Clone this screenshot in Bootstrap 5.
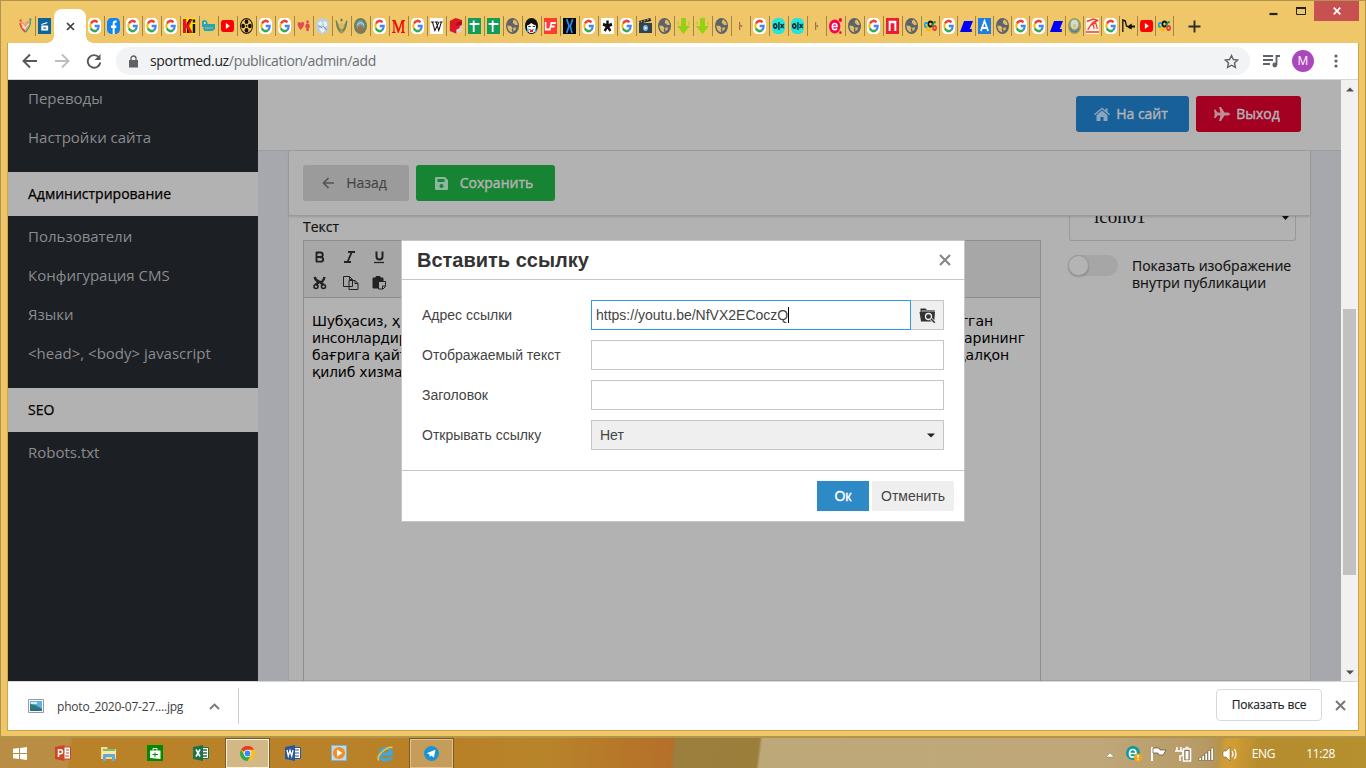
<!DOCTYPE html>
<html lang="ru">
<head>
<meta charset="utf-8">
<title>sportmed.uz</title>
<link href="https://cdn.jsdelivr.net/npm/bootstrap@5.3.0/dist/css/bootstrap.min.css" rel="stylesheet">
<script src="https://cdn.jsdelivr.net/npm/bootstrap@5.3.0/dist/js/bootstrap.bundle.min.js"></script>
<style>
body{width:1366px;height:768px;overflow:hidden;font-family:"Open Sans","Noto Sans",sans-serif;line-height:1.2}
svg{display:block;flex:none}
.desk{width:1366px;height:768px}
.win{height:738px;background:#efc769;border:1px solid #b3944d;border-bottom:2px solid #b3944d;padding:0 6px}
.strip{height:42px;padding:11px 0 0 10px}
.tabc{width:19px;height:29px;padding-top:5px;flex:none;position:relative}
.tabc.slim{width:18px}
.tabc::after{content:"";position:absolute;right:0;top:4px;width:1px;height:20px;background:#a08448}
.tabc.plain::after{display:none}
.tabc svg{width:13px;height:16px;margin:1px 0 0 2px}
.tabon{width:32px;height:34px;margin:-3px 0 0 -1px;background:#fff;border-radius:8px 8px 0 0;position:relative;flex:none}
.tabon::before,.tabon::after{content:"";position:absolute;bottom:0;width:7px;height:7px;background:radial-gradient(circle at 0 0,transparent 6.5px,#fff 7px)}
.tabon::before{left:-7px}
.tabon::after{right:-7px;background:radial-gradient(circle at 100% 0,transparent 6.5px,#fff 7px)}
.caps{position:absolute;right:6px;top:0;height:20px}
.capx{width:45px;height:20px;background:#c75050}
.client{width:1352px;height:688px;border:1px solid #cfa34a;border-top:0;background:#fff}
.tools{height:37px;border-bottom:1px solid #d5d6d8}
.omni{width:1134px;height:28px;border-radius:14px;background:#f1f3f4;margin-left:14px;font-size:14px;color:#6b6f73;padding:0 11px 0 13px}
.omni b{font-weight:400;color:#222427}
.url{margin-left:12px;letter-spacing:-.34px}
.ava{width:22px;height:22px;border-radius:50%;background:#ab47bc;color:#fff;font-size:12px;margin-left:12px}
.page{height:601px;background:#a6a8ad;overflow:hidden}
.side{width:250px;background:#1c1f24;color:#8b8c8e;font-size:15px}
.side a{display:flex;align-items:center;height:39px;padding:0 0 2px 20px;color:inherit;text-decoration:none}
.grp{padding:1px 0 15px}
.grp.first{padding-top:0}
.grp.first a:first-child{height:38px}
.side h6{height:44px;margin:0;background:#b2b2b2;color:#000;font-size:14px;font-weight:400;padding-left:20px;-webkit-text-stroke:.25px #000}
.main{width:1083px}
.topbar{height:71px;background:#b2b2b2;border-bottom:1px solid #9c9da1;padding:0 40px 2px 0}
.bt{height:36px;border:0;border-radius:3px;font-size:14px;line-height:1;padding:0 3px 0 0;-webkit-text-stroke:.45px currentColor;display:flex;align-items:center;justify-content:center}
.bt:hover{color:inherit}
.panel{width:1023px;height:530px;margin-left:30px;background:#b2b2b2;border:1px solid #9fa1a6;border-top:0}
.bar2{height:65px;border-bottom:1px solid #9b9b9b;box-shadow:0 1px 2px rgba(0,0,0,.15);padding:0 14px;position:relative;z-index:1}
.edit{width:738px;height:460px;border:1px solid #8d8d8d;margin-top:4px}
.etb{height:57px;background:#a7a7a7;border-bottom:1px solid #8d8d8d;padding:8px 8px}
.etx{font-family:"DejaVu Sans",sans-serif;font-size:14px;line-height:17px;color:#000;padding:15px 8px;white-space:nowrap;letter-spacing:-.06px}
.etx .lft{letter-spacing:-.22px}
.cutsel{height:25px;border:1px solid #999;border-top:0;border-radius:0 0 3px 3px;overflow:hidden;width:227px;font:19px/19px "Liberation Serif",serif;color:#111;padding:0 5px 0 24px}
.swt{width:50px;height:21px;border-radius:11px;background:#a6a6a6;margin-left:-1px}
.swt i{display:block;width:21px;height:21px;border-radius:50%;background:#b4b4b4;border:1px solid #999;box-shadow:0 1px 2px rgba(0,0,0,.2)}
.scr{width:17px;background:#f1f1f1;padding:7px 2px 6px}
.thumb{height:266px;background:#c1c1c1;margin-top:217px}
.veil{position:absolute;inset:0;padding-top:160px}
.dlg{width:564px;height:282px;background:#fff;border:1px solid #c5c5c5;font-family:"Liberation Sans",Arial,sans-serif;font-size:14px;color:#444}
.dlg h5{height:39px;border-bottom:1px solid #c5c5c5;margin:0;padding:0 13px 0 15px;font-size:20px;font-weight:700;color:#333}
.dlg .lines{height:191px;border-bottom:1px solid #c5c5c5;padding:20px;display:flex;flex-direction:column;gap:10px}
.lb{width:169px}
.fld{height:30px;border:1px solid #c5c5c5;width:353px;padding:0 8px}
.fld.on{width:320px;border-color:#3498db;padding:0 4px}
.caret1{width:1px;height:16px;background:#000}
.shelf{height:49px;border-top:1px solid #d8d8d8;color:#3c4043;font-size:12px}
.dl{width:231px;height:36px;border-right:1px solid #cfcfcf;padding-left:20px}
.fnm{margin:2px 0 0 13px;letter-spacing:-.2px}
.showall{width:106px;height:32px;border:1px solid #d8d9dc;border-radius:4px;font-size:12px;letter-spacing:-.15px;color:#202124;-webkit-text-stroke:.15px;margin-top:-2px}
.task{height:30px;background:linear-gradient(98deg,transparent 0 1209px,#cf9c35 1214px 1224px,transparent 1250px),linear-gradient(97deg,#b98d43 0 69px,#b98229 73px 300px,#b98026 440px,#b8842a 540px,#b56f29 668px,#9b7f3d 672px,#9c7e3b 754px,transparent 757px),linear-gradient(90deg,#bda879 757px,#c0a779 1100px,#b69a66 1205px,#b68b2d 1240px,#b5902f)}
.ti{width:46px;height:30px;flex:none}
.ti.first{width:40px}
.ti.act{width:43px;height:29px;border:1px solid #fff4dd;outline:1px solid #7a5a26;background:#d3b787;margin:0 1.5px}
.ti.run{width:43px;height:29px;border:1px solid #e2c18c;outline:1px solid #7a5a26;background:#c59c5a;margin:0 1.5px}
.tray{color:#fff;font-size:12px;letter-spacing:-.35px;padding:2px 31px 0 0}
</style>
</head>
<body>
<svg width="0" height="0" class="position-absolute"><defs>
<symbol id="g" viewBox="0 0 16 16" preserveAspectRatio="none"><rect width="16" height="16" rx="5" fill="#fff"/><g fill="none" stroke-width="2.6"><path d="M3.6 5.6A5.2 5.2 0 0 1 11.7 4.2" stroke="#ea4335"/><path d="M3.5 5.5A5.3 5.3 0 0 0 3.5 10.5" stroke="#fbbc05"/><path d="M3.5 10.4A5.3 5.3 0 0 0 11.4 12" stroke="#34a853"/><path d="M8.2 8H13.2A5.2 5.2 0 0 1 11.3 12" stroke="#4285f4"/></g></symbol>
<symbol id="heart" viewBox="0 0 16 16" preserveAspectRatio="none"><path d="M1 4c2-2 5 0 6 2 2-4 6-4 7-3-2 5-4 8-8 11C3 11 1 8 1 4z" fill="#e9a27a"/><path d="M1 5c1 5 4 7 7 9" stroke="#e04a35" stroke-width="1.6" fill="none"/><path d="M14 3c1 5-3 8-6 11" stroke="#4a9d78" stroke-width="1.6" fill="none"/><path d="M4 6l3 4 5-4M4 9l4 2" stroke="#fff" fill="none"/><circle cx="14" cy="1.5" r="1.3" fill="#3c9c70"/><circle cx="2" cy="2.5" r="1.2" fill="#e04a35"/></symbol>
<symbol id="clap" viewBox="0 0 16 16" preserveAspectRatio="none"><path d="M0 0h16v16H0z" fill="#0a659c"/><path d="M4 7.500h8.500v5H4zM4 6l7.500-2v1.300L4 7z" fill="#fff"/><path d="M6.500 9.500h3.500v1.200H6.500z" fill="#0a659c"/></symbol>
<symbol id="fb" viewBox="0 0 16 16" preserveAspectRatio="none"><rect width="16" height="16" rx="5" fill="#1283f5"/><path d="M7 16v-6H5V7.400h2V5.600C7 3.400 8.300 2.500 10 2.500h1.800v2.300h-1.200c-.9 0-1.2.4-1.2 1.200v1.400h2.300L11.300 10H9.400v6z" fill="#fff"/></symbol>
<symbol id="ki" viewBox="0 0 16 16" preserveAspectRatio="none"><path d="M0 0h16v16H0z" fill="#ffe100"/><path d="M0 1h4v5l4-5h4L7.500 8 12 15H8L4 9.500V15H0z" fill="#e5141b"/><path d="M5 10l3 5H5zM12 6h3v9h-3zM12 1.500h3v3h-3zM8 1h2L5 7V5z" fill="#111"/></symbol>
<symbol id="croc" viewBox="0 0 16 16" preserveAspectRatio="none"><path d="M0 3l3-1 3 1 1 3h9v5l-3 2H3l-2-3 2-1H0z" fill="#2ca3a8"/><path d="M4 10h10" stroke="#bfeaea" stroke-dasharray="1.5 1"/><circle cx="3.500" cy="5" r="1" fill="#fff"/></symbol>
<symbol id="yt" viewBox="0 0 16 16" preserveAspectRatio="none"><rect y="2" width="16" height="12" rx="3" fill="#f00"/><path d="M6 5l5 3-5 3z" fill="#fff"/></symbol>
<symbol id="reel" viewBox="0 0 16 16" preserveAspectRatio="none"><circle cx="8" cy="8" r="7.400" fill="none" stroke="#2a2110" stroke-width="1.200"/><g fill="#171208"><circle cx="8" cy="3.800" r="2.300"/><circle cx="8" cy="12.200" r="2.300"/><circle cx="3.800" cy="8" r="2.300"/><circle cx="12.200" cy="8" r="2.300"/><circle cx="8" cy="8" r="1"/></g></symbol>
<symbol id="love" viewBox="0 0 16 16" preserveAspectRatio="none"><path d="M4.500 12C0 8 0 4 2.500 4c1.200 0 2 1 2 1.500C5 4.500 6 4 7 4c3 0 2.500 4-2.500 8zM11 6h4l1 3-1.500 1v3h-3v-3L10 9z" fill="#e5484d"/><circle cx="13" cy="4" r="1.700" fill="#e5484d"/></symbol>
<symbol id="orb" viewBox="0 0 16 16" preserveAspectRatio="none"><circle cx="8" cy="8" r="8" fill="#b9cfdf"/><path d="M2 5l4-2 2 3-3 2zM9 3l4 1 1 4-4 1zM4 10l5-1 2 4-4 2z" fill="#e9f1f6"/><path d="M3 8l5 2M9 8l4 4" stroke="#6d93b0"/></symbol>
<symbol id="bird" viewBox="0 0 16 16" preserveAspectRatio="none"><path d="M1 1c0 7 1 12 7 15 6-3 7-8 7-15l-4 6H5z" fill="#a89a52"/><path d="M1.500 3c1 5 2 8 5 10M14.500 3c-1 5-2 8-5 10" stroke="#5b8360" fill="none" stroke-width="1.500"/><circle cx="8" cy="8" r="3" fill="#d7b86a"/><circle cx="8" cy="2" r="1.500" fill="#7d7a4c"/></symbol>
<symbol id="uz" viewBox="0 0 16 16" preserveAspectRatio="none"><circle cx="8" cy="8" r="8" fill="#6e7f5f"/><circle cx="8" cy="7.500" r="5" fill="#6aa5b9"/><path d="M4 10l4-3 4 3-1 3H5z" fill="#ad6c3d"/><path d="M4 7c2-3 6-3 8 0" stroke="#e8dfb0" fill="none"/></symbol>
<symbol id="m" viewBox="0 0 16 16" preserveAspectRatio="none"><path d="M0 2h4.200L8.200 11 12 2h4v.8l-1.500.7v10l1.500.7v.8h-5v-.8l1.500-.7V5L8.200 15h-.9L3 5v8.500l1.500.7v.8H0v-.8l1.700-.7v-10L0 2.800z" fill="#f00b0b"/></symbol>
<symbol id="w" viewBox="0 0 16 16" preserveAspectRatio="none"><path d="M0 0h16v16H0z" fill="#fff"/><path d="M1 4h4M6 4h4M12 4h3.500M3 4l3 8.500L11 4M7.500 4l3.300 8.500L14 4" stroke="#111" fill="none" stroke-width="1.200"/></symbol>
<symbol id="redf" viewBox="0 0 16 16" preserveAspectRatio="none"><path d="M1 3l7-3 8 2v4L9 9V7l7-2v6l-6 2v3l-9-3z" fill="#dc1827"/><path d="M9 5l7-2v3L9 8z" fill="#a90f1a"/><path d="M9 10l7-3v6l-7 3z" fill="#ddd0ca"/><path d="M8 9l5-2v3l-5 2z" fill="#dc1827"/></symbol>
<symbol id="sh" viewBox="0 0 16 16" preserveAspectRatio="none"><path d="M0 0h16v16H0z" fill="#0f9d58"/><path d="M2 6h12M7 2.500v11.500" stroke="#fff" stroke-width="2.200"/></symbol>
<symbol id="gl" viewBox="0 0 16 16" preserveAspectRatio="none"><circle cx="8" cy="8" r="8" fill="#5f6368"/><path d="M10 1.500Q14.500 3.500 14.300 7H11L10 5.500H8.500V3.200zM1.700 7.500L6 8l2 2-1 1.500 1 2.800Q2 14 1.700 7.500zM9 9.500h3.500l-1 2.500-2.500 1z" fill="#e0bc6a"/></symbol>
<symbol id="face" viewBox="0 0 16 16" preserveAspectRatio="none"><circle cx="8" cy="8" r="8" fill="#111"/><path d="M2.500 7.500l3-1 2-1.500 3 1.500 3 1v2.500c0 3-2 5-5.500 5S2.500 13 2.500 10z" fill="#fff"/><path d="M4 8.500h3M9.500 8.500h3M5.500 11.500q2.500 2 5 0" stroke="#111" fill="none"/><path d="M2.500 10.500h2v3.500h-2zM12 10.500h2V14h-2z" fill="#2ca8e8"/><path d="M6 12h4v2H6z" fill="#d22"/></symbol>
<symbol id="lf" viewBox="0 0 16 16" preserveAspectRatio="none"><path d="M0 0h16v16H0z" fill="#ff3a2e"/><path d="M2 4v7.500h5M7 12.500l2-7.500h5.500M8.500 8.500h4.500" stroke="#fff" fill="none" stroke-width="2"/></symbol>
<symbol id="xx" viewBox="0 0 16 16" preserveAspectRatio="none"><path d="M0 0h16v16H0z" fill="#05080f"/><path d="M4.500 1l3 7-3 7M12 1L9 8l2 7" stroke="#2b8be6" fill="none" stroke-width="2"/></symbol>
<symbol id="ast" viewBox="0 0 16 16" preserveAspectRatio="none"><rect width="16" height="16" rx="1" fill="#fff"/><path d="M8 2.500V8M8 8l5.500-1.800M8 8l3.500 5M8 8l-3.500 5M8 8L2.500 6.200" stroke="#111" stroke-width="3"/></symbol>
<symbol id="film" viewBox="0 0 16 16" preserveAspectRatio="none"><path d="M0 5h16v10H0z" fill="#34424b"/><path d="M0 3l14-3 1 3L1 5.500z" fill="#222"/><path d="M2 4l12-3" stroke="#ddd" stroke-dasharray="2 2"/><circle cx="8" cy="10" r="3" fill="#72b9e8"/><path d="M7 8.500l3 1.500-3 1.500z" fill="#fff"/></symbol>
<symbol id="dn" viewBox="0 0 16 16" preserveAspectRatio="none"><path d="M5 0h6v8h5l-8 8-8-8h5z" fill="#96d013"/><path d="M1.500 3.500v3.500M14.500 3.500v3.500" stroke="#a9cf2a" stroke-width="1.500"/></symbol>
<symbol id="tick" viewBox="0 0 16 16" preserveAspectRatio="none"><path d="M7 4v8" stroke="#9b5544" stroke-width="1.200"/><path d="M8 8h2" stroke="#664" stroke-width="1.500"/></symbol>
<symbol id="olx" viewBox="0 0 16 16" preserveAspectRatio="none"><rect width="16" height="16" rx="6" fill="#23e5db"/><circle cx="4" cy="8" r="2" fill="none" stroke="#062f34" stroke-width="1.800"/><path d="M8.500 4v8M10.500 6l4 4M14.500 6l-4 4" stroke="#062f34" stroke-width="1.700"/></symbol>
<symbol id="ee" viewBox="0 0 16 16" preserveAspectRatio="none"><circle cx="7" cy="8.500" r="7" fill="#f5054f"/><circle cx="14" cy="2" r="2" fill="#f5054f"/><circle cx="14" cy="14.500" r="1.500" fill="#f5054f"/><path d="M4 8.500h6c0-4-6-4-6 0s4 3.500 6 2" stroke="#fff" stroke-width="1.700" fill="none"/></symbol>
<symbol id="pp" viewBox="0 0 16 16" preserveAspectRatio="none"><path d="M0 0h16v16H0z" fill="#ee1b35"/><path d="M4.500 13V4h7v9" stroke="#fff" stroke-width="2.400" fill="none"/></symbol>
<symbol id="oly" viewBox="0 0 16 16" preserveAspectRatio="none"><g fill="none" stroke-width="1.800"><circle cx="3" cy="7" r="2.200" stroke="#08a0dc"/><circle cx="5.500" cy="10.500" r="2" stroke="#f6b90a"/><circle cx="8" cy="6" r="2.500" stroke="#111"/><circle cx="13" cy="10" r="2" stroke="#e33"/><path d="M10.500 9c0-3 1.500-5 4-5" stroke="#159545"/></g></symbol>
<symbol id="blu" viewBox="0 0 16 16" preserveAspectRatio="none"><path d="M5 3h11l-4 8h2.500v3H0z" fill="#0000fe"/></symbol>
<symbol id="aa" viewBox="0 0 16 16" preserveAspectRatio="none"><path d="M0 0h16v16H0z" fill="#1f7fe0"/><path d="M3.500 13L8 3l4.500 10M5 10h6" stroke="#fff" stroke-width="2" fill="none"/></symbol>
<symbol id="emb" viewBox="0 0 16 16" preserveAspectRatio="none"><circle cx="8" cy="8" r="8" fill="#a19b5b"/><circle cx="8" cy="6.500" r="4.800" fill="#c6e0dd"/><path d="M2.500 10c2 5 9 5 11 0" stroke="#527ea2" stroke-width="1.500" fill="none"/><circle cx="8" cy="8" r="2" fill="#e7bd52"/></symbol>
<symbol id="horse" viewBox="0 0 16 16" preserveAspectRatio="none"><path d="M0 0h16v16H0z" fill="#fff3ec"/><path d="M1 3.500l8-2.500 6 1.500-6 1.500-4 4-3 4M6 7l6-2 2 6M9 6l1 5M0 14h16" stroke="#e8402d" stroke-width="1.400" fill="none"/></symbol>
<symbol id="blk" viewBox="0 0 16 16" preserveAspectRatio="none"><path d="M1 14V2l3 1 1.500 5 4 1.500" stroke="#111" stroke-width="1.600" fill="none"/><path d="M8 7.500l4-2v6l-4-1.500zM12 7.500h4v2h-4z" fill="#111"/></symbol>
</defs></svg>

<div class="desk d-flex flex-column">
<div class="win position-relative">
  <div class="strip d-flex" id="strip"></div>
  <div class="caps d-flex">
    <svg width="90" height="20" viewBox="0 0 90 20"><path d="M45.500 13h8" stroke="#222" stroke-width="2.200"/><path d="M72.500 7.500h9v6h-9z" fill="none" stroke="#222"/><path d="M72 7h10" stroke="#222" stroke-width="2"/></svg>
    <div class="capx d-flex align-items-center justify-content-center"><svg width="8" height="8" viewBox="0 0 8 8"><path d="M.7.7l6.600 6.600M7.300.7L.7 7.300" stroke="#fff" stroke-width="1.700"/></svg></div>
  </div>
  <div class="client">
    <div class="tools d-flex align-items-center">
      <svg style="margin-left:14px" width="80" height="16" viewBox="0 0 80 16" fill="none" stroke-width="1.900"><path d="M15 8H2M8 1.500L1.500 8 8 14.500" stroke="#55585c"/><path d="M33 8h13M40 1.500L46.500 8 40 14.500" stroke="#bcbdbf"/><path d="M77 4.500A6.300 6.300 0 1 0 78.300 9.500" stroke="#55585c"/><path d="M78.500 1v6h-6z" fill="#55585c"/></svg>
      <div class="omni d-flex align-items-center">
        <svg width="9" height="13" viewBox="0 0 9 13"><path d="M0 5h9v7.500H0z" fill="#5f6368"/><path d="M2 5V3.500a2.500 2.500 0 0 1 5 0V5" fill="none" stroke="#5f6368" stroke-width="1.400"/></svg>
        <span class="url"><b>sportmed.uz</b>/publication/admin/add</span>
        <svg class="ms-auto" width="15" height="15" viewBox="0 0 15 15"><path d="M7.500 1.500l1.900 4 4.300.5-3.200 3 .9 4.400-3.900-2.200-3.900 2.200.9-4.400-3.200-3 4.300-.5z" fill="none" stroke="#5f6368" stroke-width="1.400"/></svg>
      </div>
      <svg style="margin-left:13px" width="17" height="14" viewBox="0 0 17 14"><path d="M0 2h10M0 6h10M0 10h7" stroke="#5f6368" stroke-width="1.800"/><path d="M13.500 11V2H17" fill="none" stroke="#5f6368" stroke-width="1.800"/><circle cx="11.800" cy="11" r="2.400" fill="#5f6368"/></svg>
      <div class="ava d-flex align-items-center justify-content-center">M</div>
      <svg style="margin-left:20px" width="4" height="14" viewBox="0 0 4 14" fill="#5f6368"><circle cx="2" cy="2" r="1.600"/><circle cx="2" cy="7" r="1.600"/><circle cx="2" cy="12" r="1.600"/></svg>
    </div>

    <div class="page d-flex position-relative">
      <nav class="side">
        <div class="grp first"><a href="#">Переводы</a><a href="#">Настройки сайта</a></div>
        <h6 class="d-flex align-items-center">Администрирование</h6>
        <div class="grp"><a href="#">Пользователи</a><a href="#">Конфигурация CMS</a><a href="#">Языки</a><a href="#">&lt;head&gt;, &lt;body&gt; javascript</a></div>
        <h6 class="d-flex align-items-center">SEO</h6>
        <div class="grp"><a href="#">Robots.txt</a></div>
      </nav>
      <main class="main">
        <div class="topbar d-flex align-items-center justify-content-end" style="gap:7px">
          <button class="btn bt" style="width:113px;background:#17609a;color:#b2b2b2;gap:6px"><svg width="16" height="14" viewBox="0 0 16 14" fill="#8ba6bc"><path d="M8 .5l3.500 3V1.500h2V5L16 7.300l-1 1L8 2.300 1 8.300l-1-1z"/><path d="M8 3.500l5.500 4.700V14h-4v-4h-3v4h-4V8.200z"/></svg>На сайт</button>
          <button class="btn bt" style="width:105px;background:#a30022;color:#b2b2b2;gap:6px"><svg width="16" height="14" viewBox="0 0 16 14" fill="#c08b94"><path d="M0 2.500h1.500L3.500 5.500h3L5 0h2l3.500 5.500H14Q16 6 16 7t-2 1.500h-3.500L7 14H5l1.500-5.500h-3L1.500 11H0l.8-4z"/></svg>Выход</button>
        </div>
        <div class="panel">
          <div class="bar2 d-flex align-items-center" style="gap:7px">
            <button class="btn bt" style="width:106px;background:#9b9b9b;color:#444;gap:11px;-webkit-text-stroke:.15px"><svg width="13" height="12" viewBox="0 0 13 12"><path d="M12 6H1.500M6.500 1l-5 5 5 5" fill="none" stroke="#555" stroke-width="1.700"/></svg>Назад</button>
            <button class="btn bt" style="width:139px;background:#178433;color:#b2b2b2;gap:11px"><svg width="14" height="13" viewBox="0 0 14 13"><path d="M1 0h9l3 3v9q0 1-1 1H1q-1 0-1-1V1q0-1 1-1z" fill="#8fb79b"/><path d="M2.500 2h7v3h-7z" fill="#178433"/><circle cx="6.500" cy="9" r="2" fill="#178433"/></svg>Сохранить</button>
          </div>
          <div class="d-flex">
            <div style="margin-left:14px;padding-top:3px">
              <div style="height:17px;font-size:14px;color:#111;-webkit-text-stroke:.2px">Текст</div>
              <div class="edit">
                <div class="etb">
                  <svg width="92" height="44" viewBox="0 0 92 44" fill="none" stroke="#222"><path d="M4.500 3v10M4 3.500h4.500q2.300.3 2.300 2.200T8.300 8H4.500M8 8q3.200.2 3.200 2.400T8.500 12.600H4" stroke-width="1.900"/><path d="M36 3h7M32 13h7M39.800 3l-4.300 10" stroke-width="1.800"/><path d="M64.500 2.500v5q0 3 3 3t3-3v-5" stroke-width="2"/><path d="M62 13.500h10" stroke-width="1.300"/>
                  <g transform="translate(0 5)"><path d="M2.500 23q1.500 4 5 5t5-5M7.500 27.500l-4 3.500M7.500 27.500l4 3.500" stroke-width="2.400"/><circle cx="4" cy="32.500" r="2" stroke-width="1.600"/><circle cx="11.500" cy="32.500" r="2" stroke-width="1.600"/>
                  <path d="M31.500 22.500h6l3 3v7h-9zM37.500 22.500v3h3M37 26.500h6l3 3v6h-9zM43 26.500v3h3" fill="#a7a7a7"/>
                  <path d="M61 24h3v-1.500h4V24h3v4h-5v6h-5z" fill="#222"/><path d="M66.500 27.500h7v5l-2.500 2.500h-4.500zM73 32h-2.500v3" fill="#a7a7a7"/></g></svg>
                </div>
                <div class="etx">
                  <div class="d-flex justify-content-between" style="padding-right:39px"><span class="lft">Шубҳасиз, ҳ</span><span>тган</span></div>
                  <div class="d-flex justify-content-between" style="padding-right:7px"><span class="lft">инсонлардир</span><span>ларининг</span></div>
                  <div class="d-flex justify-content-between" style="padding-right:23px"><span class="lft">бағрига қайт</span><span>қалқон</span></div>
                  <div class="lft">қилиб хизмат</div>
                </div>
              </div>
            </div>
            <div style="margin-left:28px">
              <div class="cutsel d-flex justify-content-between"><span style="margin-top:-9px">icon01</span><svg width="8" height="5" viewBox="0 0 8 5"><path d="M0 0h7L3.500 4z" fill="#111"/></svg></div>
              <div class="d-flex" style="margin-top:14px">
                <div class="swt"><i></i></div>
                <div class="text-nowrap" style="margin:2px 0 0 14px;font-size:14px;line-height:17px;color:#111;-webkit-text-stroke:.15px">Показать изображение<br>внутри публикации</div>
              </div>
            </div>
          </div>
        </div>
      </main>
      <div class="scr d-flex flex-column align-items-center"><svg width="8" height="5" viewBox="0 0 8 5"><path d="M0 4.500h8L4 .5z" fill="#505050"/></svg><div class="thumb w-100"></div><svg class="mt-auto" width="8" height="5" viewBox="0 0 8 5"><path d="M0 .5h8L4 4.500z" fill="#505050"/></svg></div>

      <div class="veil d-flex justify-content-center align-items-start">
        <div class="dlg">
          <h5 class="d-flex align-items-center justify-content-between">Вставить ссылку<svg width="12" height="12" viewBox="0 0 12 12"><path d="M1 1l10 10M11 1L1 11" stroke="#888" stroke-width="2.200"/></svg></h5>
          <div class="lines">
            <div class="d-flex align-items-center"><div class="lb">Адрес ссылки</div><div class="fld on d-flex align-items-center">https://youtu.be/NfVX2ECoczQ<i class="caret1"></i></div><div class="fld d-flex align-items-center justify-content-center border-start-0 p-0" style="width:33px;background:#efefef"><svg width="17" height="15" viewBox="0 0 17 15"><path d="M1.500 2V.5h5L8 2h7.500v2H16l-.8 9.500H2L.5 4h1z" fill="#333"/><path d="M2.500 3h12.500" stroke="#efefef" stroke-width=".8"/><circle cx="9.500" cy="8.500" r="3" fill="#333" stroke="#efefef" stroke-width="1.300"/><path d="M11.500 10.500l4.500 4.500" stroke="#efefef" stroke-width="3"/><path d="M11.800 10.800l4 4" stroke="#333" stroke-width="1.400"/></svg></div></div>
            <div class="d-flex align-items-center"><div class="lb">Отображаемый текст</div><div class="fld"></div></div>
            <div class="d-flex align-items-center"><div class="lb">Заголовок</div><div class="fld"></div></div>
            <div class="d-flex align-items-center"><div class="lb">Открывать ссылку</div><div class="fld d-flex align-items-center justify-content-between" style="background:#efefef">Нет<svg width="8" height="5" viewBox="0 0 8 5"><path d="M0 .5h8L4 4.500z" fill="#222"/></svg></div></div>
          </div>
          <div class="d-flex justify-content-end" style="gap:3px;padding:10px 10px">
            <div class="d-flex align-items-center justify-content-center" style="width:52px;height:30px;background:#2d8ac7;color:#fff;-webkit-text-stroke:.3px">Ок</div>
            <div class="d-flex align-items-center justify-content-center" style="width:82px;height:30px;background:#efefef">Отменить</div>
          </div>
        </div>
      </div>
    </div>

    <div class="shelf d-flex align-items-center">
      <div class="dl d-flex align-items-center">
        <svg width="16" height="14" viewBox="0 0 16 14"><path d="M.5.5h15v13H.5z" fill="#fff" stroke="#999"/><path d="M2 2h12v10H2z" fill="#5cb2e4"/><path d="M2 5q7 1 12 5H2z" fill="#2f7a68"/><path d="M2 10h12v2H2z" fill="#2667a8"/><path d="M3 4h6" stroke="#fff" stroke-width="1.500"/></svg>
        <span class="fnm">photo_2020-07-27....jpg</span>
        <svg class="ms-auto" style="margin-right:18px" width="11" height="7" viewBox="0 0 11 7"><path d="M1 6l4.500-4.500L10 6" fill="none" stroke="#777" stroke-width="1.800"/></svg>
      </div>
      <div class="showall ms-auto d-flex align-items-center justify-content-center">Показать все</div>
      <svg style="margin:-2px 12px 0 13px" width="11" height="11" viewBox="0 0 11 11"><path d="M1 1l9 9M10 1l-9 9" stroke="#777" stroke-width="2"/></svg>
    </div>
  </div>
</div>

<div class="task d-flex align-items-center">
  <div class="ti first d-flex align-items-center justify-content-center"><svg width="14" height="13" viewBox="0 0 14 13" fill="#fff"><path d="M0 1.700L6 1v5H0zM7 .9L14 0v6H7zM0 7h6v5l-6-.7zM7 7h7v6l-7-.9z"/></svg></div>
  <div class="ti d-flex align-items-center justify-content-center"><svg width="16" height="16" viewBox="0 0 16 16"><path d="M8 2h7.500v12H8z" fill="#fff" stroke="#d04526"/><path d="M11 5h3M11 8h3M10 11h4" stroke="#d04526"/><path d="M0 2l9.500-2v16L0 14z" fill="#d04526"/><path d="M3.500 12V4.800h2q2 0 2 2t-2 2h-2" stroke="#fff" stroke-width="1.500" fill="none"/></svg></div>
  <div class="ti d-flex align-items-center justify-content-center"><svg width="16" height="15" viewBox="0 0 16 15"><path d="M0 1h6l1 2h8v10H0z" fill="#f6dc82"/><path d="M2 3h12v2H2z" fill="#7fbd73"/><path d="M1 5h14v6H1z" fill="#f9e9a8"/><path d="M2 15V9q0-1 1-1h10q1 0 1 1v6h-3v-4H5v4z" fill="#64a8dc"/></svg></div>
  <div class="ti d-flex align-items-center justify-content-center"><svg width="16" height="16" viewBox="0 0 16 16"><path d="M0 0h16v16H0z" fill="#008a00"/><path d="M3 5.500h10.500V14L3 13z" fill="#fff"/><path d="M6 5.500V3.500h4v2" fill="none" stroke="#fff"/><path d="M5.500 9.500H11M8 7.500v4.500" stroke="#008a00"/></svg></div>
  <div class="ti d-flex align-items-center justify-content-center"><svg width="16" height="16" viewBox="0 0 16 16"><path d="M8 2.500h7.500v11H8z" fill="#fff" stroke="#1e7145"/><path d="M10 5h4M10 8h4M10 11h4" stroke="#1e7145" stroke-width="1.500"/><path d="M0 2l10-2v16L0 14z" fill="#1e7145"/><path d="M3 4.500l4 7M7 4.500l-4 7" stroke="#fff" stroke-width="1.600"/></svg></div>
  <div class="ti act d-flex align-items-center justify-content-center"><svg width="15" height="15" viewBox="0 0 16 16"><circle cx="8" cy="8" r="8" fill="#fbc116"/><path d="M8 8L1.100 4A8 8 0 0 1 15 4H8z" fill="#e33b2e"/><path d="M1.100 4A8 8 0 0 0 8 16l3.500-6L8 8 4.600 10z" fill="#2da94f"/><circle cx="8" cy="8" r="3.900" fill="#fff"/><circle cx="8" cy="8" r="3.100" fill="#4285f4"/></svg></div>
  <div class="ti d-flex align-items-center justify-content-center"><svg width="16" height="16" viewBox="0 0 16 16"><path d="M8 2.500h7.500v11H8z" fill="#fff" stroke="#2b579a"/><path d="M10 5h4M10 8h4M10 11h4" stroke="#2b579a"/><path d="M0 2l10-2v16L0 14z" fill="#2b579a"/><path d="M2 5l1.300 6L5 5.500 6.700 11 8 5" stroke="#fff" stroke-width="1.300" fill="none"/></svg></div>
  <div class="ti d-flex align-items-center justify-content-center"><svg width="16" height="16" viewBox="0 0 16 16"><path d="M.5.5h15v15H.5z" fill="#b8dcf1" stroke="#78b3d8"/><circle cx="8" cy="8" r="6" fill="#f68b1f"/><path d="M6 4.500L11.500 8 6 11.500z" fill="#fff"/></svg></div>
  <div class="ti d-flex align-items-center justify-content-center"><svg width="17" height="17" viewBox="0 0 17 17"><path d="M4 9h10.500q0-5.500-5.500-5.500T3 9.500 9 15q4 0 5.500-3" fill="none" stroke="#36a9e8" stroke-width="3"/><path d="M2 15.500Q-1 12 5.500 6.500T15.500 2.500" fill="none" stroke="#f8c52f" stroke-width="1.500"/></svg></div>
  <div class="ti run d-flex align-items-center justify-content-center"><svg width="15" height="15" viewBox="0 0 16 16"><circle cx="8" cy="8" r="8" fill="#1c93d1"/><path d="M2.800 7.800L12.200 4l-1.600 8.300-3-2.200-1.500 1.600-.3-2.900z" fill="#fff"/></svg></div>
  <div class="tray ms-auto d-flex align-items-center">
    <svg width="138" height="18" viewBox="0 0 138 18"><path d="M2 12l4-4 4 4z" fill="#fff" stroke="#7a6a4a" stroke-width=".4"/>
      <g transform="translate(1 0)"><circle cx="28" cy="8" r="7" fill="#0c9b9c"/><path d="M24.500 8.500h6.500q0-4-3.200-4t-3.300 4 3.500 3.500q2 0 2.500-.8" fill="none" stroke="#fff" stroke-width="1.700"/><circle cx="33" cy="12.500" r="4" fill="#f5a41a"/><path d="M33 10v3M33 14v1.200" stroke="#fff" stroke-width="1.300"/></g>
      <path d="M48 2v14" stroke="#fff" stroke-width="2"/><path d="M49 3h6l1 2h6l-3 5h-4l-1-2h-5z" fill="#fff" stroke="#5d4b2a" stroke-width=".7"/>
      <path d="M73 2v4M77 2v4M71 6h8v3q0 2-3 2v5" fill="none" stroke="#fff" stroke-width="1.500"/><path d="M79.500 4h7v12h-7z" fill="#8a744b" stroke="#fff" stroke-width="1.500"/><path d="M81.500 2.500h3" stroke="#fff" stroke-width="1.500"/><path d="M81.500 6h3v8.500h-3z" fill="#fff"/>
      <g fill="#fff" stroke="#5d4b2a" stroke-width=".5"><path d="M95 12.500h2.500v3H95zM98 10.500h2.500v5H98zM101 8h2.500v7.500H101zM104 5.500h2.500v10H104zM107 3h2.500v12.500H107z"/></g>
      <path d="M119 6h3l4-4v14l-4-4h-3z" fill="#fff" stroke="#5d4b2a" stroke-width=".5"/><path d="M128 6q2 3 0 6M130.500 4q3 5 0 10" fill="none" stroke="#fff" stroke-width="1.200"/></svg>
    <span style="margin-left:10px">ENG</span><span style="margin-left:31px">11:28</span>
  </div>
</div>
</div>
<script>
const before = ['heart','clap'];
const after = 'g fb g g g ki croc yt reel g g love orb bird uz g m g w redf sh sh gl face lf xx g ast g film gl dn dn gl tick g olx olx tick ee gl g pp gl oly g blu aa gl g g blu emb horse g blk yt oly'.split(' ');
const cell = (id, cls) => `<div class="tabc ${cls}"><svg><use href="#${id}"/></svg></div>`;
document.getElementById('strip').innerHTML =
  cell(before[0], '') + cell(before[1], 'plain') +
  '<div class="tabon d-flex align-items-center justify-content-center"><svg width="9" height="9" viewBox="0 0 9 9"><path d="M1 1l7 7M8 1L1 8" stroke="#3c4043" stroke-width="1.700"/></svg></div>' +
  after.map((id, i) => cell(id, i > 43 ? 'slim' : '')).join('') +
  '<svg width="13" height="13" viewBox="0 0 13 13" style="margin:8px 0 0 14px"><path d="M6.500 .5v12M.5 6.500h12" stroke="#2d2d2d" stroke-width="1.900"/></svg>';
</script>
</body>
</html>
